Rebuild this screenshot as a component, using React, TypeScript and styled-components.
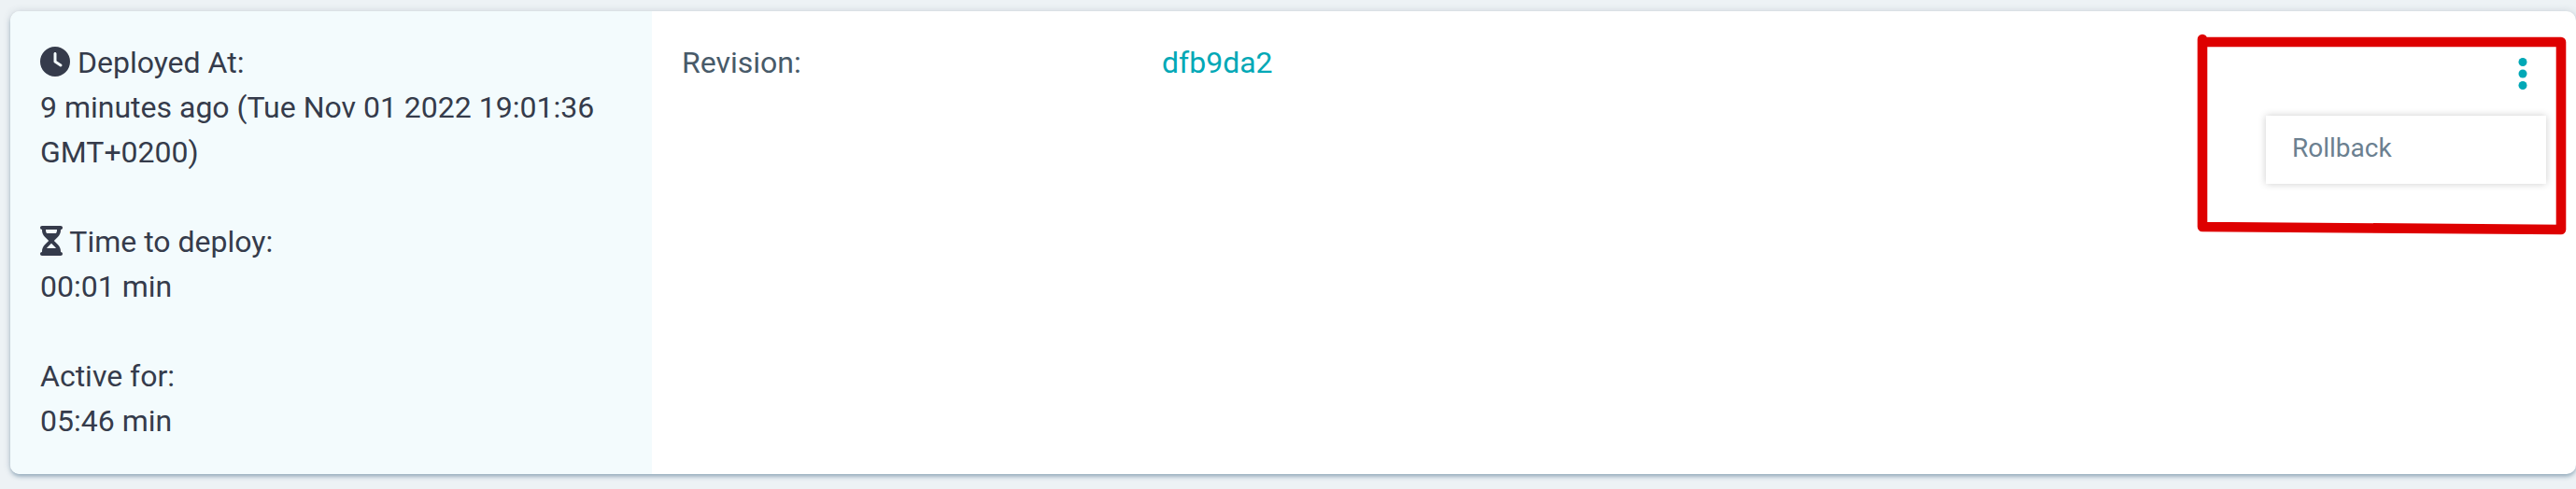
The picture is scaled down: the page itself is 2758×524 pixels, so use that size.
import React from 'react';
import styled, { createGlobalStyle } from 'styled-components';
import { FaClock, FaHourglassHalf } from 'react-icons/fa6';

const GlobalStyle = createGlobalStyle`
  * { box-sizing: border-box; }
  body {
    margin: 0;
    background: #edf2f5;
    font-family: Roboto, sans-serif;
    font-size: 32px;
    line-height: 48px;
    overflow: hidden;
  }
`;

const Page = styled.main`
  height: 524px;
  padding: 12px 0 16px 11px;
`;

const Card = styled.section`
  position: relative;
  display: flex;
  height: 496px;
  border-radius: 10px;
  background: #fff;
  box-shadow: 0 3px 5px -1px #8ba4b7, 0 0 8px rgba(60, 80, 95, 0.18);
`;

const Summary = styled.aside`
  flex: none;
  display: flex;
  flex-direction: column;
  gap: 48px;
  width: 687px;
  padding: 31px 32px 32px;
  border-radius: 10px 0 0 10px;
  background: #f3fbfd;
  color: #353b4b;
`;

const Label = styled.div<{ $iconWidth?: number }>`
  svg {
    display: inline-block;
    width: ${({ $iconWidth = 32 }) => $iconWidth}px;
    height: 32px;
    vertical-align: -4px;
  }
`;

const Details = styled.div`
  flex: 1;
  display: flex;
  padding: 31px 32px 32px;
`;

const DetailName = styled.div`
  width: 514px;
  color: #485a69;
`;

const RevisionLink = styled.a`
  color: #00a8b6;
`;

const MenuButton = styled.button`
  position: absolute;
  top: 46px;
  right: 48px;
  width: 18px;
  height: 42px;
  padding: 0;
  border: 0;
  background: none;
  color: #00a8b6;

  svg {
    display: block;
  }
`;

const Menu = styled.div`
  position: absolute;
  top: 112px;
  right: 32px;
  width: 300px;
  height: 73px;
  padding: 11px 28px;
  background: #fff;
  box-shadow: 0 0 8px rgba(0, 0, 0, 0.2);
  color: #6b8090;
  font-size: 28px;
`;

const Highlight = styled.svg`
  position: absolute;
  top: 20px;
  right: 0;
  pointer-events: none;
`;

export default function App() {
  return (
    <Page>
      <GlobalStyle />
      <Card>
        <Summary>
          <div>
            <Label><FaClock /> Deployed At:</Label>
            <div>9 minutes ago (Tue Nov 01 2022 19:01:36 GMT+0200)</div>
          </div>
          <div>
            <Label $iconWidth={24}><FaHourglassHalf /> Time to deploy:</Label>
            <div>00:01 min</div>
          </div>
          <div>
            <Label>Active for:</Label>
            <div>05:46 min</div>
          </div>
        </Summary>
        <Details>
          <DetailName>Revision:</DetailName>
          <RevisionLink>dfb9da2</RevisionLink>
        </Details>
        <MenuButton aria-label="Actions">
          <svg width="18" height="42" viewBox="0 0 18 42" fill="currentColor">
            <circle cx="9" cy="8.5" r="4.5" />
            <circle cx="9" cy="21" r="4.5" />
            <circle cx="9" cy="33.5" r="4.5" />
          </svg>
        </MenuButton>
        <Menu>Rollback</Menu>
        <Highlight width="418" height="230" viewBox="2340 32 418 230">
          <path
            d="M2358 42 V243 L2742 246 V45 H2358"
            fill="none"
            stroke="#de0000"
            strokeWidth="10.6"
            strokeLinecap="round"
            strokeLinejoin="round"
          />
        </Highlight>
      </Card>
    </Page>
  );
}
